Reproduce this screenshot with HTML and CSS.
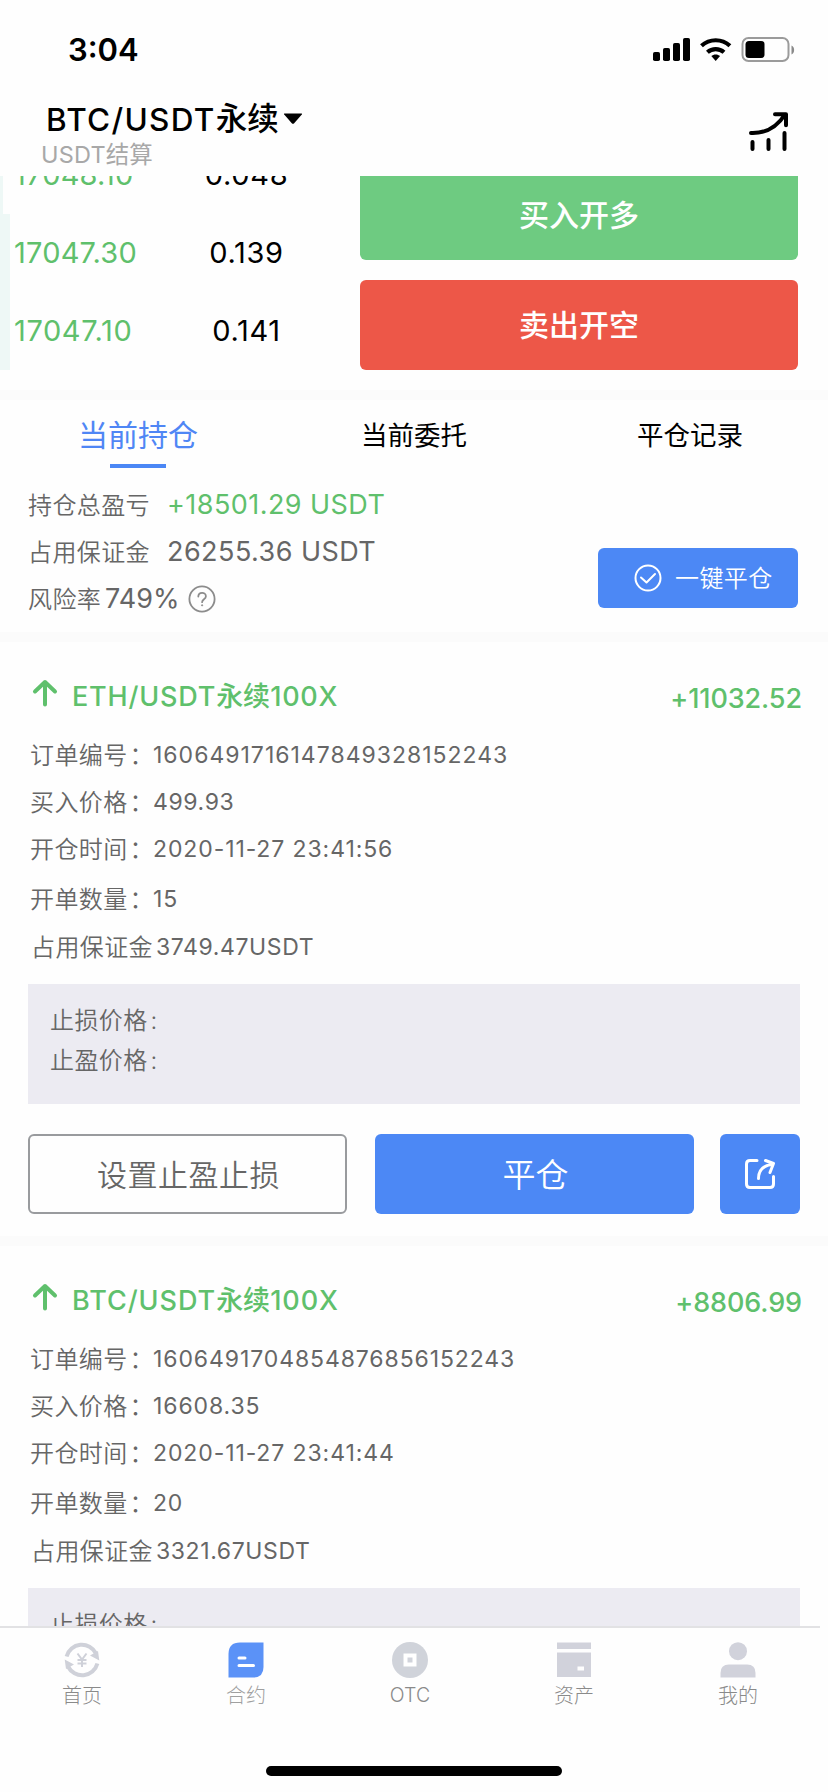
FILE: index.html
```html
<!DOCTYPE html>
<html lang="zh-CN">
<head>
<meta charset="utf-8">
<title>BTC/USDT永续</title>
<link rel="stylesheet" href="styles.css">
</head>
<body>
<div class="screen">
  <header class="top">
    <div class="status">
      <span class="time">3:04</span>
      <svg class="status-icons" width="144" height="28" viewBox="0 0 144 28">
        <g fill="#000">
          <rect x="2" y="16" width="7" height="9" rx="1.8"/>
          <rect x="12" y="12" width="7" height="13" rx="1.8"/>
          <rect x="22" y="7" width="7" height="18" rx="1.8"/>
          <rect x="32" y="2" width="7" height="23" rx="1.8"/>
          <path d="M64.700 18.500c1.700 0 3.200.6 4.400 1.600L64.700 25l-4.400-4.900c1.200-1 2.700-1.600 4.400-1.600z"/>
        </g>
        <g fill="none" stroke="#000" stroke-width="4.200">
          <path d="M56.400 16.200a12.500 12.500 0 0 1 16.600 0"/>
          <path d="M50.500 9.800a21 21 0 0 1 28.400 0"/>
        </g>
        <rect x="91.500" y="2" width="46" height="23" rx="6" fill="none" stroke="#9b9b9b" stroke-width="2"/>
        <rect x="94.500" y="5" width="19" height="17" rx="3.500" fill="#000"/>
        <path d="M140.500 9.500c3.500 1.200 3.500 7.800 0 9z" fill="#8a8a8a"/>
      </svg>
    </div>
    <div class="heading">
      <div class="names">
        <div class="pair"><span class="pair-latin">BTC/USDT</span><span class="pair-cjk">永续</span><svg class="caret" width="20" height="12" viewBox="0 0 20 12"><path d="M1.500.500h17q1 0 .3.900l-7.600 8.800q-1.200 1.200-2.400 0L1.200 1.400Q.500.500 1.500.500z"/></svg></div>
        <div class="settle"><span class="settle-latin">USDT</span>结算</div>
      </div>
      <svg class="trend" width="40" height="42" viewBox="0 0 40 42" fill="none" stroke="#000" stroke-width="4" stroke-linecap="round" stroke-linejoin="round">
        <path d="M3 23c15 .6 26-6 34-18.500M27 4.200h11v11"/>
        <path d="M4.500 32v7M20.500 30v9M36.500 23v16"/>
      </svg>
    </div>
  </header>

  <main class="content">
    <section class="trade">
      <div class="book">
        <div class="level"><i class="depth thin"></i><span class="price">17048.10</span><span class="amount">0.048</span></div>
        <div class="level"><i class="depth"></i><span class="price">17047.30</span><span class="amount">0.139</span></div>
        <div class="level"><i class="depth"></i><span class="price wide">17047.10</span><span class="amount">0.141</span></div>
      </div>
      <div class="actions">
        <button class="act buy">买入开多</button>
        <button class="act sell">卖出开空</button>
      </div>
    </section>

    <nav class="tabs">
      <a class="tab on">当前持仓</a>
      <a class="tab">当前委托</a>
      <a class="tab">平仓记录</a>
    </nav>

    <section class="summary">
      <div class="stats">
        <div class="stat"><span class="label">持仓总盈亏</span><span class="num up">+18501.29 USDT</span></div>
        <div class="stat"><span class="label">占用保证金</span><span class="num">26255.36 USDT</span></div>
        <div class="stat risk"><span class="label">风险率</span><span class="num">749%</span>
          <svg class="help" width="28" height="28" viewBox="0 0 28 28" fill="none" stroke="#8c8c8c" stroke-width="1.800"><circle cx="14" cy="14" r="12.600"/><path d="M10.300 11.600c0-5 7.600-5 7.600-.4 0 3-3.800 3.100-3.800 6" stroke-linecap="round"/><circle cx="14.100" cy="20.300" r=".6" fill="#8c8c8c" stroke-width="1"/></svg>
        </div>
      </div>
      <button class="close-all"><svg width="28" height="28" viewBox="0 0 28 28" fill="none" stroke="#fff" stroke-width="2" stroke-linecap="round" stroke-linejoin="round"><circle cx="14" cy="14" r="12.500"/><path d="M7 13.500l5.500 5 8.500-8.500"/></svg><span>一键平仓</span></button>
    </section>

    <article class="card">
      <div class="card-head">
        <svg class="arrow" width="26" height="28" viewBox="0 0 26 28"><path d="M13 25.500V3M3 12.500L13 3l10 9.500"/></svg>
        <span class="name"><span>ETH/USDT</span>永续<span>100X</span></span>
        <span class="profit">+11032.52</span>
      </div>
      <div class="row"><span class="label">订单编号<i>：</i></span><span class="val long">1606491716147849328152243</span></div>
      <div class="row"><span class="label">买入价格<i>：</i></span><span class="val tight">499.93</span></div>
      <div class="row"><span class="label">开仓时间<i>：</i></span><span class="val">2020-11-27 23:41:56</span></div>
      <div class="row count"><span class="label">开单数量<i>：</i></span><span class="val">15</span></div>
      <div class="row margin"><span class="label">占用保证金</span><span class="val tight">3749.47USDT</span></div>
      <div class="limits"><div>止损价格<span>:</span></div><div>止盈价格<span>:</span></div></div>
      <div class="buttons">
        <button class="btn ghost">设置止盈止损</button>
        <button class="btn solid">平仓</button>
        <button class="btn share"><svg width="34" height="34" viewBox="0 0 34 34" fill="none" stroke="#fff" stroke-width="3" stroke-linecap="round" stroke-linejoin="round"><path d="M14 3.500H7Q3.500 3.500 3.500 7v20q0 3.500 3.500 3.500h20q3.500 0 3.500-3.500v-7.500"/><path d="M15.500 21.500C15.500 13.500 20 8.500 29 7.500M22.500 3.500l8 3-3.500 9"/></svg></button>
      </div>
    </article>

    <article class="card">
      <div class="card-head">
        <svg class="arrow" width="26" height="28" viewBox="0 0 26 28"><path d="M13 25.500V3M3 12.500L13 3l10 9.500"/></svg>
        <span class="name second"><span>BTC/USDT</span>永续<span>100X</span></span>
        <span class="profit">+8806.99</span>
      </div>
      <div class="row"><span class="label">订单编号<i>：</i></span><span class="val">1606491704854876856152243</span></div>
      <div class="row"><span class="label">买入价格<i>：</i></span><span class="val">16608.35</span></div>
      <div class="row"><span class="label">开仓时间<i>：</i></span><span class="val">2020-11-27 23:41:44</span></div>
      <div class="row count"><span class="label">开单数量<i>：</i></span><span class="val tight">20</span></div>
      <div class="row margin"><span class="label">占用保证金</span><span class="val tight">3321.67USDT</span></div>
      <div class="limits"><div>止损价格<span>:</span></div></div>
    </article>
  </main>

  <footer class="bottom">
    <nav class="bar">
      <a class="item">
        <svg width="36" height="36" viewBox="0 0 36 36"><g fill="none" stroke="#cfd1d9" stroke-width="4"><path d="M2.600 14.500A15.800 15.800 0 0 1 32 11.500"/><path d="M33.400 21.500A15.800 15.800 0 0 1 4 24.500"/></g><path d="M35.300 18.500L34 9l-8 4.500zM.700 17.500L2 27l8-4.500z" fill="#cfd1d9"/><path d="M13.500 11.500l4.500 6 4.500-6M18 17.500V25M13.500 18h9M13.500 21.600h9" fill="none" stroke="#cfd1d9" stroke-width="2"/></svg>
        首页</a>
      <a class="item">
        <svg width="36" height="36" viewBox="0 0 36 36"><path d="M.500 35.500V12Q.500.500 12 .500h23.500V25q0 10.500-10.500 10.500z" fill="#5b92f7"/><path d="M11 16h6M11 23.500h14.500" stroke="#fff" stroke-width="3" stroke-linecap="round"/></svg>
        <span class="dim">合约</span></a>
      <a class="item">
        <svg width="36" height="36" viewBox="0 0 36 36"><circle cx="18" cy="18" r="18" fill="#d0d3da"/><path d="M11.500 11.500h13v13h-13z" fill="#fff"/><path d="M15.500 15.500h5v5h-5z" fill="#d0d3da"/></svg>
        <span class="otc">OTC</span></a>
      <a class="item">
        <svg width="36" height="36" viewBox="0 0 36 36" fill="#d1d2db"><path d="M1 .500h34v6.500H1z"/><path d="M1 10.500h34v24.500H1zM21.500 24.500v4h6.500v-4z" fill-rule="evenodd"/></svg>
        资产</a>
      <a class="item">
        <svg width="36" height="36" viewBox="0 0 36 36" fill="#d1d2db"><circle cx="18" cy="9.200" r="9"/><path d="M.500 35.500V31q0-8.500 8.500-8.500h18q8.500 0 8.500 8.500v4.500z"/></svg>
        我的</a>
    </nav>
    <div class="home"></div>
  </footer>
</div>
</body>
</html>
```

FILE: styles.css
```css
* { box-sizing: border-box; }
body {
  margin: 0;
  background: #fefefe;
  font-family: Inter, "Noto Sans CJK SC", sans-serif;
  color: #666;
}
button { border: 0; padding: 0; font: inherit; }
svg { display: block; flex: none; }

.screen { width: 828px; height: 1792px; display: flex; flex-direction: column; overflow: hidden; }

/* status bar and heading */
.top { height: 176px; flex: none; color: #000; }
.status { height: 98px; padding: 2px 33px 0 68px; display: flex; align-items: center; justify-content: space-between; }
.time { font-size: 31px; font-weight: 600; letter-spacing: 0; line-height: 40px; }
.heading { display: flex; justify-content: space-between; padding: 0 40px 0 41px; }
.pair { display: flex; align-items: center; height: 44px; padding-left: 5px; font-weight: 500; line-height: 42px; }
.pair-latin { font-size: 31.5px; letter-spacing: 1.3px; }
.pair-cjk { font-size: 31.5px; padding-bottom: 2px; }
.caret { margin: 0 0 3px 4px; }
.settle { height: 26px; line-height: 26px; font-size: 23.5px; color: #a8a8a8; }
.settle-latin { letter-spacing: .2px; }
.trend { margin-top: 12px; }

/* scrolling content */
.content { height: 1450px; flex: none; overflow: hidden; }
.trade { height: 224px; display: flex; justify-content: space-between; align-items: flex-end; overflow: hidden; padding: 0 30px 20px 0; border-bottom: 10px solid #fbfbfb; }
.book { width: 330px; }
.level { height: 78px; display: flex; align-items: center; font-size: 29px; font-weight: 400; }
.depth { width: 10px; height: 78px; background: #eef8f6; }
.depth.thin { width: 3px; margin-right: 7px; }
.price { width: 166px; padding: 0 0 1px 4px; color: #5fc06c; letter-spacing: .2px; }
.price.wide { letter-spacing: .6px; }
.amount { width: 141px; padding-bottom: 1px; text-align: center; color: #000; letter-spacing: .7px; }
.actions { width: 438px; display: flex; flex-direction: column; gap: 20px; }
.act { height: 90px; padding-bottom: 4px; border-radius: 6px; color: #fff; font-size: 30px; font-weight: 500; }
.buy { background: #6ecb81; }
.sell { background: #ed5748; }

.tabs { height: 70px; display: flex; }
.tab { flex: 1; display: flex; flex-direction: column; align-items: center; font-size: 26.5px; line-height: 71px; color: #000; }
.tab.on { font-size: 30px; color: #4f86f5; }
.tab.on::after { content: ""; width: 56px; height: 4px; margin-top: -7px; background: #4b87f5; }

.summary { height: 172px; display: flex; justify-content: space-between; padding: 11px 30px 0 28px; border-bottom: 10px solid #fbfbfb; }
.stat { display: flex; align-items: center; height: 47px; }
.label { font-size: 24px; font-weight: 350; letter-spacing: .4px; padding-bottom: 3px; }
.label i { font-style: normal; margin-left: 2px; margin-right: -2px; }
.stat .label { width: 139px; }
.stat .num { font-size: 27px; letter-spacing: .45px; }
.num.up { color: #5fc06c; }
.stat.risk .label { width: 77px; }
.stat.risk .num { letter-spacing: 0; }
.help { margin-left: 9px; }
.close-all { width: 200px; height: 60px; margin-top: 67px; border-radius: 6px; background: #4c88f5; color: #fff; font-size: 24px; font-weight: 350; letter-spacing: .4px; display: flex; align-items: center; padding-left: 36px; gap: 13px; }
.close-all svg { margin-top: -1px; }
.close-all span { padding-bottom: 4px; }

/* position cards */
.card { padding: 0 28px 22px; border-bottom: 10px solid #fbfbfb; }
.card-head { display: flex; align-items: center; height: 89px; padding-top: 20px; color: #5fc06c; font-weight: 500; font-size: 27px; }
.arrow { margin: -8px 14px 0 4px; fill: none; stroke: #5fc06c; stroke-width: 4; stroke-linecap: round; stroke-linejoin: round; }
.name { flex: 1; padding-bottom: 4px; }
.name span { letter-spacing: .8px; }
.name.second span { letter-spacing: .95px; }
.profit { margin-right: -2px; padding-top: 4px; letter-spacing: -.1px; }
.row { height: 47px; display: flex; align-items: center; padding-left: 2px; }
.row .label { width: 123px; flex: none; white-space: nowrap; }
.row .val { font-size: 23px; letter-spacing: .9px; }
.row .val.long { letter-spacing: 1px; }
.row .val.tight { letter-spacing: .6px; }
.row.count { margin-top: 3px; }
.row.margin { margin-top: 1px; padding-left: 3px; }
.row.margin .label { width: 125px; }
.limits { height: 120px; margin-top: 14px; padding: 17px 22px; background: #ecebf2; font-size: 24px; font-weight: 350; letter-spacing: .4px; line-height: 40px; }
.limits span { margin-left: 3px; }
.buttons { display: flex; margin-top: 30px; }
.btn { height: 80px; border-radius: 6px; color: #fff; background: #4c88f5; display: flex; align-items: center; justify-content: center; font-weight: 350; }
.ghost { width: 319px; border: 2px solid #999b9e; background: transparent; color: #666; font-size: 30px; letter-spacing: .5px; padding: 0 0 3px 2px; }
.solid { width: 319px; margin-left: 28px; font-size: 33px; padding: 0 0 3px 2px; }
.share { width: 80px; margin-left: 26px; }

/* bottom bar */
.bottom { height: 166px; flex: none; display: flex; flex-direction: column; background: #fefefe; }
.bar { width: 820px; height: 140px; display: flex; border-top: 2px solid #e2e2e4; }
.item { flex: 1; display: flex; flex-direction: column; align-items: center; padding-top: 14px; font-size: 20px; font-weight: 300; line-height: 36px; color: #8a8a8a; }
.dim { color: #a0a0a0; }
.otc { font-weight: 350; font-size: 19.5px; letter-spacing: .2px; line-height: 35px; }
.home { width: 296px; height: 10px; margin-left: 266px; border-radius: 5px; background: #000; }
```
